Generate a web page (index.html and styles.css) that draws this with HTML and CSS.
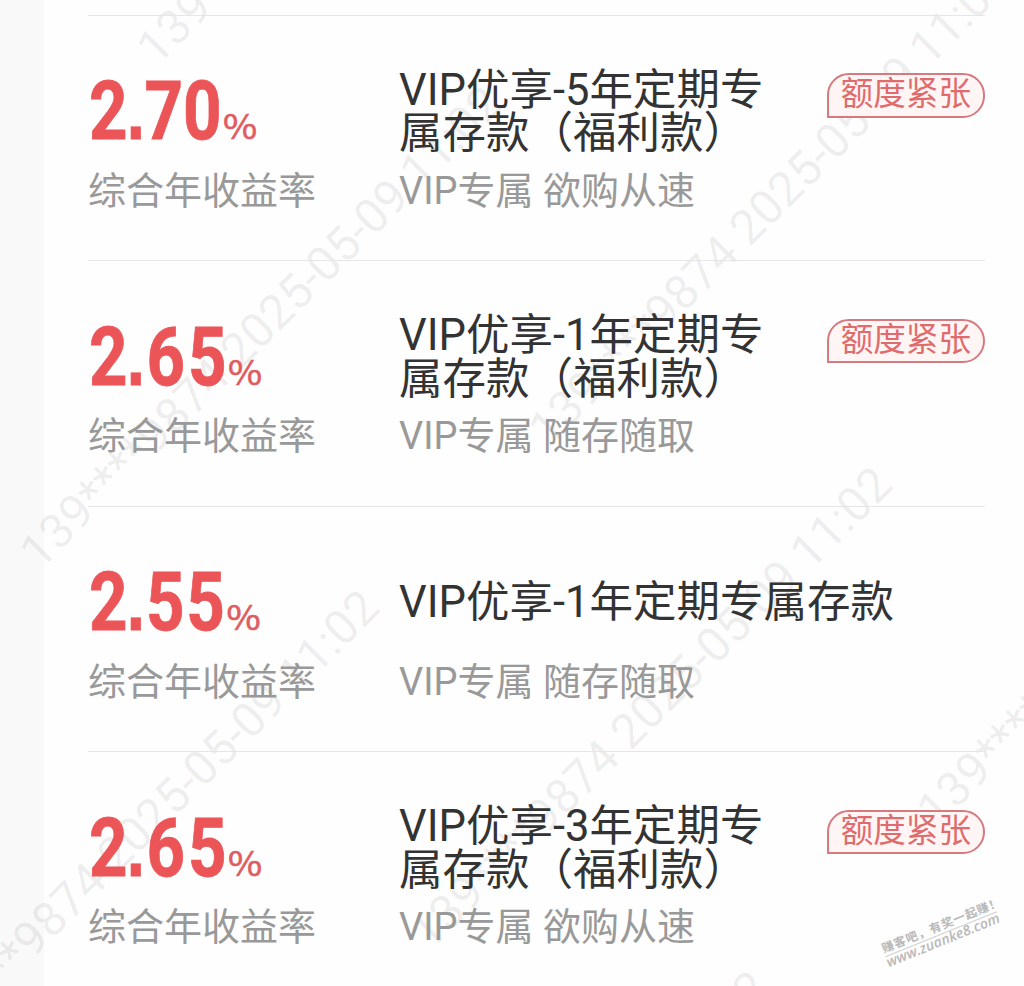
FILE: index.html
```html
<!DOCTYPE html>
<html lang="zh-CN">
<head>
<meta charset="utf-8">
<title>VIP优享存款</title>
<link rel="stylesheet" href="styles.css">
</head>
<body>
<main class="list">
  <section class="row">
    <div class="rate">
      <svg class="value" width="200" height="64" role="img" aria-label="2.70%">
        <text class="num" transform="scale(.83 1)" y="60" x="1.2 46.5 68 114.5">2<tspan class="dot">.</tspan>70</text>
        <text class="pct" transform="translate(135 60) scale(1.09 1)">%</text>
      </svg>
      <p class="label">综合年收益率</p>
    </div>
    <div class="info">
      <h2 class="title"><span>VIP优享-5年定期专<br>属存款（福利款）</span></h2>
      <p class="label">VIP专属 欲购从速</p>
    </div>
    <span class="tag">额度紧张</span>
  </section>
  <section class="row">
    <div class="rate">
      <svg class="value" width="200" height="64" role="img" aria-label="2.65%">
        <text class="num" transform="scale(.83 1)" y="60" x="1.2 46.5 70.5 120.5">2<tspan class="dot">.</tspan>65</text>
        <text class="pct" transform="translate(140 60) scale(1.09 1)">%</text>
      </svg>
      <p class="label">综合年收益率</p>
    </div>
    <div class="info">
      <h2 class="title"><span>VIP优享-1年定期专<br>属存款（福利款）</span></h2>
      <p class="label">VIP专属 随存随取</p>
    </div>
    <span class="tag">额度紧张</span>
  </section>
  <section class="row">
    <div class="rate">
      <svg class="value" width="200" height="64" role="img" aria-label="2.55%">
        <text class="num" transform="scale(.83 1)" y="60" x="1.2 46.5 70 118.5">2<tspan class="dot">.</tspan>55</text>
        <text class="pct" transform="translate(138.5 60) scale(1.09 1)">%</text>
      </svg>
      <p class="label">综合年收益率</p>
    </div>
    <div class="info">
      <h2 class="title"><span>VIP优享-1年定期专属存款</span></h2>
      <p class="label">VIP专属 随存随取</p>
    </div>
  </section>
  <section class="row">
    <div class="rate">
      <svg class="value" width="200" height="64" role="img" aria-label="2.65%">
        <text class="num" transform="scale(.83 1)" y="60" x="1.2 46.5 70.5 120.5">2<tspan class="dot">.</tspan>65</text>
        <text class="pct" transform="translate(140 60) scale(1.09 1)">%</text>
      </svg>
      <p class="label">综合年收益率</p>
    </div>
    <div class="info">
      <h2 class="title"><span>VIP优享-3年定期专<br>属存款（福利款）</span></h2>
      <p class="label">VIP专属 欲购从速</p>
    </div>
    <span class="tag">额度紧张</span>
  </section>
</main>
<svg class="watermark" width="1024" height="986" viewBox="0 0 1024 986" aria-hidden="true">
  <g class="stamp">
    <text transform="translate(157 67) rotate(-45)">139****9874 2025-05-09 11:02</text>
    <text transform="translate(40 571) rotate(-45)">139****9874 2025-05-09 11:02</text>
    <text transform="translate(549 448) rotate(-45)">139****9874 2025-05-09 11:02</text>
    <text transform="translate(-83 1075) rotate(-45)">139****9874 2025-05-09 11:02</text>
    <text transform="translate(430 952) rotate(-45)">139****9874 2025-05-09 11:02</text>
    <text transform="translate(937 829) rotate(-45)">139****9874 2025-05-09 11:02</text>
    <text transform="translate(307 1456) rotate(-45)">139****9874 2025-05-09 11:02</text>
  </g>
  <g class="site" transform="translate(884 953) rotate(-22)">
    <text class="site-name" x="0" y="0" textLength="127">赚客吧，有奖一起赚！</text>
    <path d="M0 4H120"/>
    <text class="site-url" x="-1" y="15" textLength="121">www.zuanke8.com</text>
  </g>
</svg>
</body>
</html>
```
FILE: styles.css
```css
* { box-sizing: border-box; }
body {
  margin: 0;
  height: 986px;
  overflow: hidden;
  position: relative;
  background: linear-gradient(90deg, #f9f9f9 44px, #fefefe 44px);
  font-family: Roboto, "Noto Sans CJK SC", sans-serif;
}
.list {
  height: 986px;
  margin-left: 44px;
  padding: 14.5px 39px 0 44px;
  overflow: hidden;
}
.row {
  display: grid;
  grid-template-columns: 311px 1fr auto;
  align-items: start;
  height: 245.5px;
  padding-top: 52.5px;
  border-top: 1.5px solid #e6e6e6;
}
.rate { padding-top: 11px; }
.value { display: block; overflow: visible; }
.num {
  font-size: 81px;
  font-weight: 700;
  fill: #ec5558;
  stroke: #ec5558;
  stroke-width: .8px;
}
.dot { font-family: "Liberation Sans", sans-serif; }
.pct {
  font-family: "Noto Sans CJK SC", sans-serif;
  font-size: 34px;
  font-weight: 400;
  fill: #e05c60;
  stroke: #e05c60;
  stroke-width: .6px;
}
.label {
  margin: 0;
  font-size: 38px;
  line-height: 50px;
  color: #999;
  white-space: nowrap;
}
.rate .label { margin-top: 22.5px; }
.info { width: 0; white-space: nowrap; }
.title {
  display: flex;
  align-items: center;
  height: 88px;
  margin: 0 0 9.5px;
  font-size: 43.5px;
  font-weight: 400;
  line-height: 43.5px;
  color: #333;
}
.tag {
  height: 44.5px;
  margin-top: 5px;
  padding: 0 12px 0 11.5px;
  border: 2px solid #d67a80;
  border-radius: 22px 22px 22px 0;
  background: #fff5f4;
  color: #df6b6d;
  font-size: 32.6px;
  line-height: 38px;
}
.watermark {
  position: absolute;
  left: 0;
  top: 0;
  z-index: -1;
  pointer-events: none;
}
.stamp {
  font-size: 48px;
  fill: rgba(0, 0, 0, .07);
}
.site { fill: #b8b8b8; }
.site path { stroke: #d0d0d0; }
.site-name { font-size: 12px; font-weight: 700; }
.site-url {
  font-family: "Open Sans", sans-serif;
  font-size: 14px;
  font-style: italic;
  font-weight: 600;
}
```
